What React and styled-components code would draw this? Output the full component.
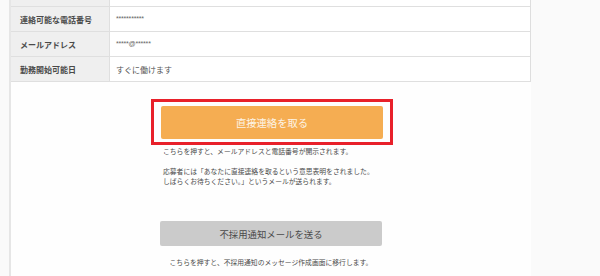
import React from "react";
import styled, { createGlobalStyle } from "styled-components";

const GlobalStyle = createGlobalStyle`
  html, body {
    margin: 0;
    padding: 0;
    background: #fafafa;
    overflow: hidden;
  }
  body {
    font-family: "Noto Sans CJK JP", "Noto Sans", sans-serif;
    color: #444;
  }
`;

const Panel = styled.div`
  margin-left: 9px;
  width: 520px;
  height: 300px;
  border-left: 2px solid #e6e6e6;
  background: #fefefe;
`;

const Table = styled.div`
  margin-top: -18px;
  border-right: 1px solid #dedede;
`;

const Row = styled.div`
  display: flex;
  height: 25px;
  box-sizing: border-box;
  border-bottom: 1px solid #dfdfdf;
`;

const Label = styled.div`
  width: 99px;
  flex-shrink: 0;
  display: flex;
  align-items: center;
  padding-left: 9px;
  box-sizing: border-box;
  background: #efefef;
  border-right: 1px solid #dfdfdf;
  font-size: 8px;
  font-weight: 700;
  color: #4a4a4a;
`;

const Value = styled.div`
  flex: 1;
  display: flex;
  align-items: center;
  padding-left: 6px;
  background: #fff;
  font-size: 8px;
  color: #555;
`;

const Masked = styled.span`
  font-family: "Liberation Sans", Arial, sans-serif;
  font-size: 7px;
  letter-spacing: -0.2px;
  color: #666;
  margin-top: -2px;
`;

const Actions = styled.div`
  display: flex;
  flex-direction: column;
  align-items: flex-start;
  padding-left: 140px;
  margin-top: 17px;
`;

const Highlight = styled.div`
  width: 242px;
  height: 46px;
  box-sizing: border-box;
  border: 3px solid #e8202a;
  display: flex;
  align-items: center;
  justify-content: center;
`;

const Button = styled.div`
  width: 222px;
  height: ${({ $h }) => $h}px;
  display: flex;
  align-items: center;
  justify-content: center;
  border-radius: 2px;
  background: ${({ $bg }) => $bg};
  color: ${({ $color }) => $color};
  font-size: ${({ $size }) => $size}px;
  margin-left: ${({ $indent }) => $indent || 0}px;
  margin-top: ${({ $top }) => $top || 0}px;
`;

const Note = styled.div`
  width: 222px;
  margin-left: 9px;
  margin-top: ${({ $top }) => $top}px;
  padding-left: ${({ $center }) => ($center ? 0 : 3)}px;
  box-sizing: border-box;
  text-align: ${({ $center }) => ($center ? "center" : "left")};
  font-size: 6.8px;
  line-height: 10px;
  color: #4a4a4a;
  white-space: nowrap;
`;

const rows = [
  { id: "top", label: "", value: "" },
  { id: "tel", label: "連絡可能な電話番号", value: "***********", masked: true },
  { id: "mail", label: "メールアドレス", value: "*****@******", masked: true },
  { id: "start", label: "勤務開始可能日", value: "すぐに働けます" },
];

export default function App() {
  return (
    <>
      <GlobalStyle />
      <Panel>
        <Table>
          {rows.map((r) => (
            <Row key={r.id}>
              <Label>{r.label}</Label>
              <Value>{r.masked ? <Masked>{r.value}</Masked> : r.value}</Value>
            </Row>
          ))}
        </Table>
        <Actions>
          <Highlight>
            <Button $h={33} $bg="#f5ad52" $color="#fdf4e6" $size={10.3}>
              直接連絡を取る
            </Button>
          </Highlight>
          <Note $top={1}>こちらを押すと、メールアドレスと電話番号が開示されます。</Note>
          <Note $top={10}>
            応募者には「あなたに直接連絡を取るという意思表明をされました。
            <br />
            しばらくお待ちください。」というメールが送られます。
          </Note>
          <Button $h={25} $bg="#cbcbcb" $color="#4a4a4a" $size={9.4} $indent={9} $top={35}>
            不採用通知メールを送る
          </Button>
          <Note $top={11} $center>
            こちらを押すと、不採用通知のメッセージ作成画面に移行します。
          </Note>
        </Actions>
      </Panel>
    </>
  );
}
